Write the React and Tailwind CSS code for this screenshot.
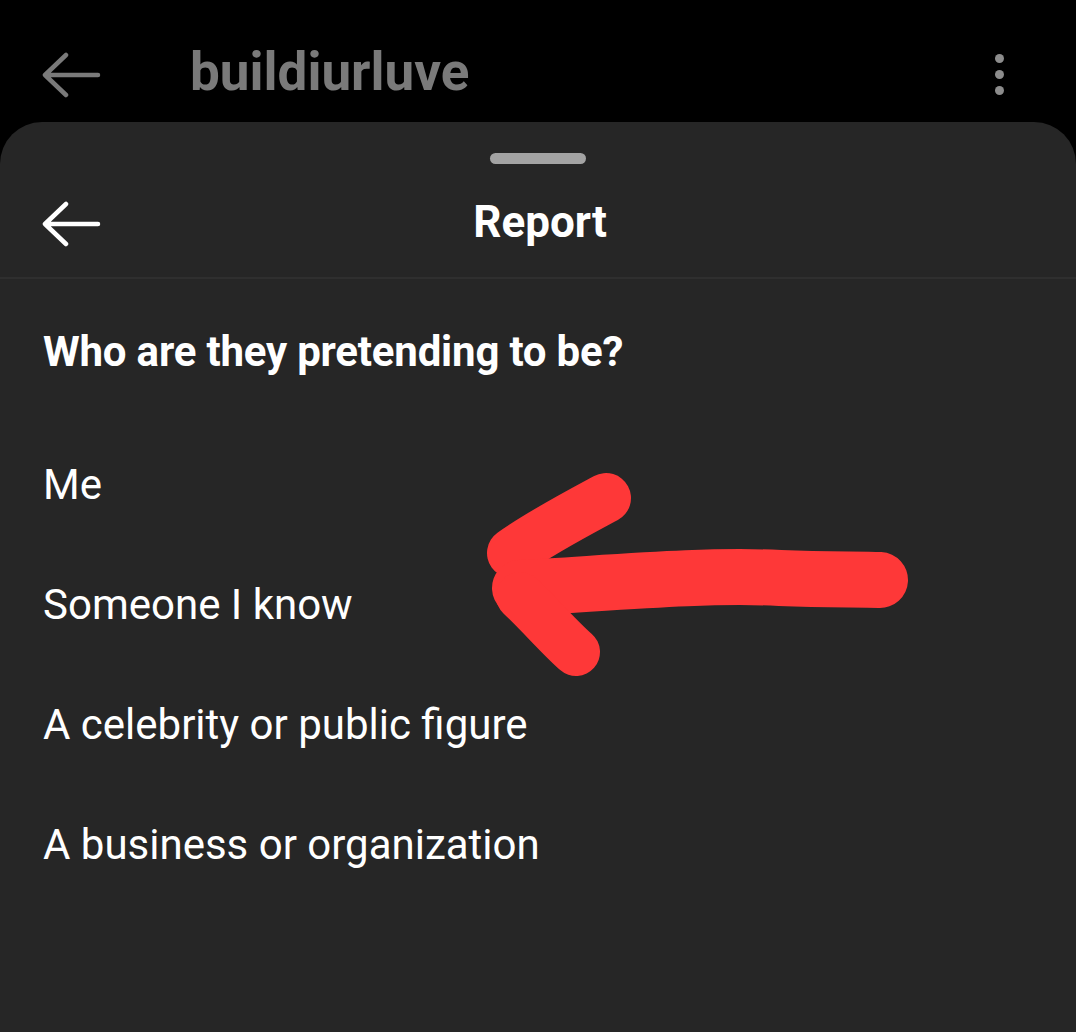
import React from 'react';

const BackArrow = ({ color }) => (
  <svg width="60" height="48" viewBox="0 0 60 48" fill="none">
    <path d="M3 24 H56 M24 4 L3 24 L24 44" stroke={color} strokeWidth="4.5" strokeLinecap="round" strokeLinejoin="round" />
  </svg>
);

const options = ['Me', 'Someone I know', 'A celebrity or public figure', 'A business or organization'];

const App = () => {
  return (
    <div className="relative w-[1076px] h-[1032px] bg-black flex flex-col overflow-hidden font-['Roboto',sans-serif]">
      {/* Top bar behind the sheet */}
      <div className="h-[122px] flex items-center pl-[42px] pr-[72px] pt-[28px] shrink-0">
        <BackArrow color="#7a7a7a" />
        <span className="ml-[88px] text-[53px] font-bold text-[#7a7a7a] leading-none -mt-[6px]">buildiurluve</span>
        <div className="ml-auto flex flex-col gap-[7px] -mt-[2px]">
          <span className="w-[9px] h-[9px] rounded-full bg-[#8c8c8c]" />
          <span className="w-[9px] h-[9px] rounded-full bg-[#8c8c8c]" />
          <span className="w-[9px] h-[9px] rounded-full bg-[#8c8c8c]" />
        </div>
      </div>

      {/* Bottom sheet */}
      <div className="flex-1 bg-[#262626] rounded-t-[42px] flex flex-col">
        <div className="mt-[31px] mx-auto w-[96px] h-[11px] rounded-full bg-[#a3a3a3]" />

        <div className="relative h-[113px] flex items-center justify-center">
          <div className="absolute left-[42px] top-[36px]">
            <BackArrow color="#ffffff" />
          </div>
          <span className="text-[44px] font-bold text-white mt-[2px] ml-[4px]">Report</span>
        </div>
        <div className="h-[2px] bg-[#2f2f2f]" />

        <div className="px-[43px] pt-[48px] flex flex-col">
          <h2 className="text-[42px] font-bold text-white leading-[50px] tracking-[-0.2px]">Who are they pretending to be?</h2>
          <div className="mt-[48px] flex flex-col">
            {options.map((opt) => (
              <div key={opt} className="h-[120px] flex items-center text-[42px] text-white leading-none">
                {opt}
              </div>
            ))}
          </div>
        </div>
      </div>

      {/* Hand-drawn red arrow annotation */}
      <svg className="absolute left-0 top-0 pointer-events-none" width="1076" height="1032" viewBox="0 0 1076 1032" fill="none">
        <g stroke="#fe3838" strokeLinecap="round" strokeLinejoin="round">
          <path d="M606 498 C580 512 540 533 512 553" strokeWidth="50" />
          <path d="M520 588 C600 584 700 574 780 578 C830 580 860 579 880 580" strokeWidth="56" />
          <path d="M520 596 C540 615 560 638 576 652" strokeWidth="48" />
        </g>
      </svg>
    </div>
  );
};

export default App;
